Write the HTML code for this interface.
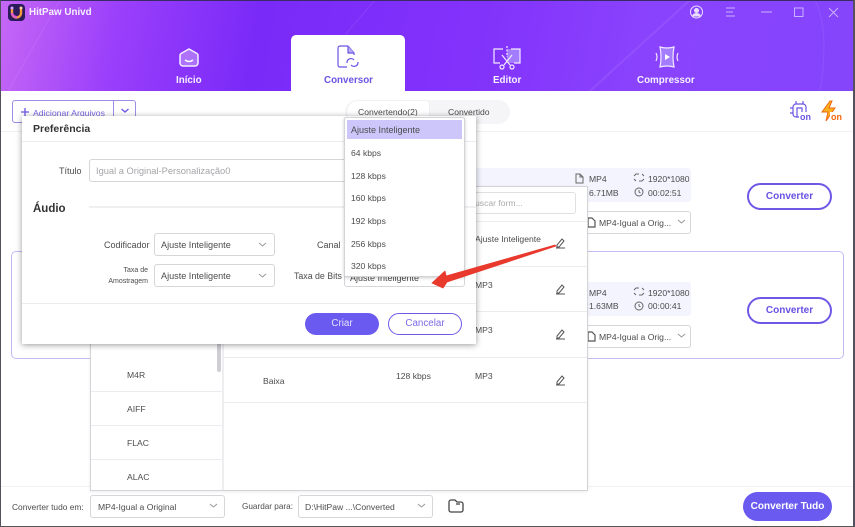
<!DOCTYPE html>
<html><head><meta charset="utf-8"><style>
*{box-sizing:border-box;margin:0;padding:0}
html,body{width:855px;height:527px;overflow:hidden;background:#fff}
#w{position:absolute;left:0;top:0;width:855px;height:527px;overflow:hidden;filter:blur(.35px);font-family:"Liberation Sans","DejaVu Sans",sans-serif;font-size:8.6px;color:#4c4c4c}
.a{position:absolute}
.t{position:absolute;white-space:nowrap;line-height:12px}
.sel{position:absolute;background:#fff;border:1px solid #d6d6da;border-radius:3px}
.ln{position:absolute;height:1px;background:#ececf0}
.pb{position:absolute;border:2px solid #7057e6;border-radius:14px;color:#6a50e2;font-weight:bold;text-align:center;background:#fff;font-size:10px}
.n{color:#f6f0ff;font-weight:bold;font-size:9.800px}
</style></head><body><div id="w">
<div class="a" style="left:0;top:0;width:855px;height:91px;background:linear-gradient(100deg,#c668f5 0%,#9a3ffb 14%,#7a2af8 30%,#8232fb 55%,#8a43fd 75%,#8445fb 100%)"></div>
<svg class="a" style="left:0;top:0" width="855" height="91"><g fill="none" stroke="#fff" stroke-opacity=".08"><path d="M60 0L8 91"/><path d="M375 0L345 35"/><path d="M690 0L590 91" stroke-width="2"/><path d="M815 0Q830 30 820 91"/></g></svg>
<div class="a" style="left:0;top:0;width:855px;height:1px;background:#3a2a66"></div>

<!-- logo -->
<svg class="a" style="left:8px;top:4px" width="17" height="17"><rect width="17" height="17" rx="4" fill="#2b1a5c"/><path d="M4 5v4a4.500 4.500 0 0 0 9 0V5" fill="none" stroke="#f59a3c" stroke-width="2.400"/><path d="M4 9a4.500 4.500 0 0 0 5 4" fill="none" stroke="#e65ad0" stroke-width="2.400"/><circle cx="4" cy="4" r="1.500" fill="#d9a4ff"/><circle cx="13" cy="4" r="1.500" fill="#ffd0a0"/></svg>
<div class="t n" style="left:29px;top:7px">HitPaw Univd</div>

<!-- window icons -->
<svg class="a" style="left:688px;top:4px" width="160" height="18" fill="none" stroke="#eadfff" stroke-width="1"><circle cx="8.500" cy="8" r="6"/><circle cx="8.500" cy="6.500" r="2" fill="#eadfff"/><path d="M4.500 12.500a4 3 0 0 1 8 0" fill="#eadfff"/><g stroke-opacity=".7"><path d="M38 4h9M38 8h7M38 12h9"/><path d="M73 8h11"/><rect x="106.500" y="4" width="8.500" height="8.500"/><path d="M141 4l9 9M150 4l-9 9"/></g></svg>

<!-- conversor tab -->
<div class="a" style="left:291px;top:35px;width:114px;height:57px;background:#fff;border-radius:5px 5px 0 0"></div>

<!-- nav icons -->
<svg class="a" style="left:178px;top:47px" width="22" height="22"><path d="M11 2l8 4.500q1 .6 1 2V16a3 3 0 0 1-3 3H5a3 3 0 0 1-3-3V8.500q0-1.400 1-2z" fill="#f3e8ff" fill-opacity=".35" stroke="#f5eeff" stroke-width="1.500"/><path d="M7 13q4 3 8 0" fill="none" stroke="#fff" stroke-width="1.500"/></svg>
<svg class="a" style="left:335px;top:44px" width="26" height="26" fill="none" stroke="#6b54e4" stroke-width="1.200"><path d="M13 2H5a2 2 0 0 0-2 2v17a2 2 0 0 0 2 2h7"/><path d="M13 2l6 7v2"/><path d="M13 2v7h6" fill="#b9adf3"/><path d="M12 19a4 4 0 0 1 7-3M23 18a4 4 0 0 1-7 3"/></svg>
<svg class="a" style="left:492px;top:45px" width="30" height="26" fill="none" stroke="#f3e9ff" stroke-width="1.200"><rect x="15" y="4" width="13" height="14" fill="#a47cff" stroke="none"/><path d="M11 4H2v14h6M19 4h9v14h-6"/><path d="M15 1v11" stroke-dasharray="2 1.500"/><path d="M10 10l8 10M20 10l-8 10"/><circle cx="10" cy="22" r="2"/><circle cx="20" cy="22" r="2"/></svg>
<svg class="a" style="left:654px;top:45px" width="26" height="24" fill="none" stroke="#f3e9ff" stroke-width="1.200"><path d="M6 2q7 2 14 0-2 10 0 20-7-2-14 0 2-10 0-20z" fill="#a47cff"/><path d="M11 9l5 3-5 3z" fill="#fff" stroke="none"/><path d="M2 8q2 4 0 8M24 8q-2 4 0 8"/></svg>

<div class="t n" style="left:176px;top:75px">Início</div>
<div class="t n" style="left:324px;top:75px;color:#6b54e4">Conversor</div>
<div class="t n" style="left:493px;top:75px">Editor</div>
<div class="t n" style="left:637px;top:75px">Compressor</div>

<!-- toolbar -->
<div class="a" style="left:12px;top:100px;width:124px;height:23px;border:1px solid #9d8ce8;border-radius:3px"></div>
<div class="a" style="left:113px;top:100px;width:1px;height:23px;background:#9d8ce8"></div>
<svg class="a" style="left:20px;top:107px" width="10" height="10" fill="none" stroke="#6b54e4" stroke-width="1.300"><path d="M5 1v8M1 5h8"/></svg>
<div class="t" style="left:33px;top:107px;color:#7c68e6;font-size:8.700px">Adicionar Arquivos</div>
<svg class="a" style="left:120px;top:107px" width="10" height="8" fill="none" stroke="#6b54e4" stroke-width="1.300"><path d="M1.500 2l3.500 3 3.500-3"/></svg>
<div class="a" style="left:345px;top:100px;width:165px;height:24px;background:#f5f5f7;border-radius:12px"></div>
<div class="a" style="left:346px;top:100px;width:84px;height:24px;background:#fff;border-radius:12px 4px 4px 12px;border:1px solid #f0f0f2"></div>
<div class="t" style="left:358px;top:106px">Convertendo(2)</div>
<div class="t" style="left:448px;top:106px">Convertido</div>
<div class="ln" style="left:0;top:131px;width:855px;background:#f1f1f3"></div>

<svg class="a" style="left:790px;top:101px" width="22" height="22" fill="none" stroke="#6b54e4" stroke-width="1.200"><rect x="3" y="3" width="13" height="13" rx="3"/><path d="M7 16V7h5v7M6 0v3M13 0v3M0 7h3M0 12h3"/></svg>
<div class="t" style="left:799px;top:112px;color:#6b54e4;font-weight:bold;font-size:9px;background:#fff;padding:0 1px;line-height:10px">on</div>
<svg class="a" style="left:821px;top:100px" width="18" height="24"><path d="M9 1L1 12h6l-2 9 9-13H8l3-7z" fill="#fbb11f" stroke="#f2660d" stroke-width="1"/></svg>
<div class="t" style="left:830px;top:112px;color:#f2660d;font-weight:bold;font-size:9px;background:#fff;padding:0 1px;line-height:10px">on</div>

<!-- file rows -->
<div class="a" style="left:11px;top:251px;width:833px;height:108px;border:1.500px solid #c5bbf2;border-radius:5px"></div>
<div class="a" style="left:440px;top:168px;width:251px;height:34px;background:#f4f4ff;border-radius:3px"></div>
<div class="a" style="left:440px;top:282px;width:251px;height:34px;background:#f4f4ff;border-radius:3px"></div>

<div class="t" style="left:589px;top:173px">MP4</div>
<div class="t" style="left:589px;top:187px">6.71MB</div>
<div class="t" style="left:648px;top:173px">1920*1080</div>
<div class="t" style="left:648px;top:187px">00:02:51</div>
<div class="t" style="left:589px;top:287px">MP4</div>
<div class="t" style="left:589px;top:300px">1.63MB</div>
<div class="t" style="left:648px;top:287px">1920*1080</div>
<div class="t" style="left:648px;top:300px">00:00:41</div>
<svg class="a" style="left:574px;top:172px" width="72" height="30" fill="none" stroke="#666" stroke-width="1"><path d="M2 2h4l3 3v6H2zM6 2v3h3"/><path d="M60 4l2-2h3M70 7l-2 2h-3M60 7l2 2M70 4l-2-2"/><circle cx="65" cy="20" r="4"/><path d="M65 18v2l1.500 1"/></svg>
<svg class="a" style="left:574px;top:286px" width="72" height="30" fill="none" stroke="#666" stroke-width="1"><path d="M60 4l2-2h3M70 7l-2 2h-3M60 7l2 2M70 4l-2-2"/><circle cx="65" cy="20" r="4"/><path d="M65 18v2l1.500 1"/></svg>

<div class="sel" style="left:560px;top:211px;width:131px;height:23px"></div>
<div class="sel" style="left:560px;top:325px;width:131px;height:23px"></div>
<div class="t" style="left:599px;top:217px">MP4-Igual a Orig...</div>
<div class="t" style="left:599px;top:331px">MP4-Igual a Orig...</div>
<svg class="a" style="left:586px;top:216px" width="106" height="14" fill="none" stroke="#555" stroke-width="1"><path d="M2 2h4l3 3v6H2z" stroke-width="1.200"/><path d="M92 4l3.500 3L99 4" stroke="#999"/></svg>
<svg class="a" style="left:586px;top:330px" width="106" height="14" fill="none" stroke="#555" stroke-width="1"><path d="M2 2h4l3 3v6H2z" stroke-width="1.200"/><path d="M92 4l3.500 3L99 4" stroke="#999"/></svg>

<div class="pb" style="left:747px;top:183px;width:85px;height:27px;line-height:24px">Converter</div>
<div class="pb" style="left:747px;top:297px;width:85px;height:27px;line-height:24px">Converter</div>

<!-- bottom -->
<div class="ln" style="left:0;top:486px;width:855px;background:#f1f1f3"></div>
<div class="t" style="left:12px;top:501px;font-size:8.400px">Converter tudo em:</div>
<div class="sel" style="left:90px;top:495px;width:135px;height:23px"></div>
<div class="t" style="left:98px;top:501px">MP4-Igual a Original</div>
<svg class="a" style="left:209px;top:502px" width="10" height="8" fill="none" stroke="#999"><path d="M1 2l3.500 3L8 2"/></svg>
<div class="t" style="left:242px;top:501px;font-size:8.200px">Guardar para:</div>
<div class="sel" style="left:298px;top:495px;width:135px;height:23px"></div>
<div class="t" style="left:305px;top:501px">D:\HitPaw ...\Converted</div>
<svg class="a" style="left:417px;top:502px" width="10" height="8" fill="none" stroke="#999"><path d="M1 2l3.500 3L8 2"/></svg>
<svg class="a" style="left:447px;top:498px" width="18" height="16" fill="none" stroke="#444" stroke-width="1.300"><path d="M2 4a2 2 0 0 1 2-2h4l2 2h4a2 2 0 0 1 2 2v6a2 2 0 0 1-2 2H4a2 2 0 0 1-2-2z"/><path d="M9 6h4"/></svg>
<div class="a" style="left:743px;top:492px;width:89px;height:29px;background:#6a5af0;border-radius:15px;color:#fff;font-weight:bold;font-size:10px;text-align:center;line-height:29px">Converter Tudo</div>

<!-- format popup -->
<div class="a" style="left:90px;top:186px;width:498px;height:305px;background:#fff;border:1px solid #d4d4d8;box-shadow:0 1px 3px rgba(0,0,0,.08)"></div>
<div class="a" style="left:222px;top:187px;width:2px;height:303px;background:#eeeef0"></div>
<div class="a" style="left:217px;top:340px;width:4px;height:32px;background:#cfcfd3;border-radius:2px"></div>
<div class="ln" style="left:91px;top:391px;width:131px"></div>
<div class="ln" style="left:91px;top:425px;width:131px"></div>
<div class="ln" style="left:91px;top:459px;width:131px"></div>
<div class="t" style="left:127px;top:369px">M4R</div>
<div class="t" style="left:127px;top:403px">AIFF</div>
<div class="t" style="left:127px;top:437px">FLAC</div>
<div class="t" style="left:127px;top:471px">ALAC</div>
<div class="ln" style="left:224px;top:221px;width:363px"></div>
<div class="ln" style="left:224px;top:266px;width:363px"></div>
<div class="ln" style="left:224px;top:311px;width:363px"></div>
<div class="ln" style="left:224px;top:357px;width:363px"></div>
<div class="ln" style="left:224px;top:402px;width:363px"></div>
<div class="sel" style="left:440px;top:192px;width:136px;height:22px;border-color:#e0e0e3"></div>
<div class="t" style="left:475px;top:197px;color:#aaa">uscar form...</div>
<div class="t" style="left:475px;top:233px">Ajuste Inteligente</div>
<div class="t" style="left:475px;top:279px">MP3</div>
<div class="t" style="left:475px;top:324px">MP3</div>
<div class="t" style="left:475px;top:370px">MP3</div>
<div class="t" style="left:396px;top:370px">128 kbps</div>
<div class="t" style="left:263px;top:375px">Baixa</div>
<svg class="a" style="left:555px;top:237px" width="12" height="12" fill="none" stroke="#555"><path d="M2 8l5-6 2 2-5 6H2zM1 11h9"/></svg>
<svg class="a" style="left:555px;top:283px" width="12" height="12" fill="none" stroke="#555"><path d="M2 8l5-6 2 2-5 6H2zM1 11h9"/></svg>
<svg class="a" style="left:555px;top:328px" width="12" height="12" fill="none" stroke="#555"><path d="M2 8l5-6 2 2-5 6H2zM1 11h9"/></svg>
<svg class="a" style="left:555px;top:374px" width="12" height="12" fill="none" stroke="#555"><path d="M2 8l5-6 2 2-5 6H2zM1 11h9"/></svg>

<!-- dialog -->
<div class="a" style="left:22px;top:116px;width:454px;height:228px;background:#fff;box-shadow:0 1px 6px rgba(0,0,0,.4)"></div>
<div class="t" style="left:33px;top:123px;color:#333;font-weight:bold;font-size:10.500px">Preferência</div>
<div class="ln" style="left:22px;top:141px;width:454px"></div>
<div class="t" style="left:59px;top:165px;font-size:9px">Título</div>
<div class="sel" style="left:89px;top:159px;width:360px;height:23px"></div>
<div class="t" style="left:96px;top:165px;color:#a5a5a9;font-size:9.300px">Igual a Original-Personalização0</div>
<div class="t" style="left:33px;top:203px;color:#333;font-weight:bold;font-size:11.500px">Áudio</div>
<div class="ln" style="left:89px;top:206px;width:387px;height:2px;background:#f0f0f2"></div>
<div class="t" style="left:104px;top:239px;font-size:9px">Codificador</div>
<div class="sel" style="left:154px;top:233px;width:121px;height:23px"></div>
<div class="t" style="left:161px;top:239px;font-size:9.100px">Ajuste Inteligente</div>
<svg class="a" style="left:258px;top:241px" width="10" height="8" fill="none" stroke="#999"><path d="M1 2l3.500 3L8 2"/></svg>
<div class="t" style="left:100px;top:265px;width:48px;text-align:right;font-size:7px;line-height:11px">Taxa de<br>Amostragem</div>
<div class="sel" style="left:154px;top:264px;width:121px;height:23px"></div>
<div class="t" style="left:161px;top:270px;font-size:9.100px">Ajuste Inteligente</div>
<svg class="a" style="left:258px;top:272px" width="10" height="8" fill="none" stroke="#999"><path d="M1 2l3.500 3L8 2"/></svg>
<div class="t" style="left:317px;top:239px;font-size:9px">Canal</div>
<div class="t" style="left:294px;top:270px;font-size:8.800px">Taxa de Bits</div>
<div class="sel" style="left:344px;top:264px;width:121px;height:23px"></div>
<div class="t" style="left:350px;top:272px;font-size:9px">Ajuste Inteligente</div>
<div class="ln" style="left:22px;top:303px;width:454px"></div>
<div class="a" style="left:305px;top:313px;width:74px;height:22px;background:#6a5af0;border-radius:11px;color:#e8e4ff;font-size:9.800px;text-align:center;line-height:22px">Criar</div>
<div class="pb" style="left:388px;top:313px;width:74px;height:22px;line-height:20px;border-radius:11px;border-width:1px;font-weight:normal;font-size:9.800px;color:#7c68e6">Cancelar</div>

<!-- dropdown -->
<div class="a" style="left:344px;top:117px;width:121px;height:160px;background:#fff;border:1px solid #d4d4d8;border-radius:2px;box-shadow:0 1px 3px rgba(0,0,0,.2)"></div>
<div class="a" style="left:347px;top:120px;width:115px;height:19px;background:#ccc6fb"></div>
<div class="t" style="left:351px;top:124px;font-size:9px">Ajuste Inteligente</div>
<div class="t" style="left:351px;top:147px">64 kbps</div>
<div class="t" style="left:351px;top:170px">128 kbps</div>
<div class="t" style="left:351px;top:192px">160 kbps</div>
<div class="t" style="left:351px;top:215px">192 kbps</div>
<div class="t" style="left:351px;top:238px">256 kbps</div>
<div class="t" style="left:351px;top:260px">320 kbps</div>

<!-- red arrow -->
<svg class="a" style="left:425px;top:238px" width="135" height="52"><path d="M130 7L21 38l-1-5L7 45l11 5 4-6L131 8z" fill="#e8392c" stroke="#e8392c" stroke-width=".8" stroke-linejoin="round"/></svg>

<!-- window edges -->
<div class="a" style="left:0;top:0;width:1px;height:527px;background:#55505f"></div>
<div class="a" style="left:853px;top:0;width:2px;height:527px;background:#55505f"></div>
<div class="a" style="left:0;top:526px;width:855px;height:1px;background:#555"></div>
</div></body></html>
